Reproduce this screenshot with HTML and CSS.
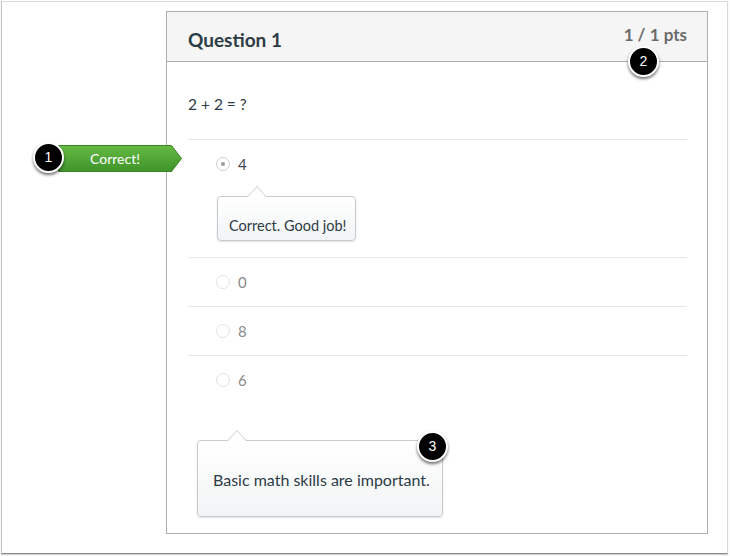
FILE: index.html
```html
<!DOCTYPE html>
<html>
<head>
<meta charset="utf-8">
<link rel="stylesheet" href="styles.css">
</head>
<body>
<div class="frame">
  <div class="card">
    <div class="card-header">
      <div class="title">Question 1</div>
      <div class="pts">1 / 1 pts</div>
    </div>
    <div class="card-body">
      <div class="question">2 + 2 = ?</div>
      <div class="answer answer-first">
        <div class="answer-line selected">
          <span class="radio radio-on"></span><span class="answer-text">4</span>
        </div>
        <div class="tip tip-small">Correct. Good job!</div>
      </div>
      <div class="answer">
        <div class="answer-line"><span class="radio"></span><span class="answer-text">0</span></div>
      </div>
      <div class="answer">
        <div class="answer-line"><span class="radio"></span><span class="answer-text">8</span></div>
      </div>
      <div class="answer answer-last">
        <div class="answer-line"><span class="radio"></span><span class="answer-text">6</span></div>
      </div>
      <div class="tip tip-large">Basic math skills are important.</div>
    </div>
  </div>

  <div class="label">
    <svg class="label-shape" width="124" height="27" viewBox="0 0 124 27">
      <defs>
        <linearGradient id="g" x1="0" y1="0" x2="0" y2="1">
          <stop offset="0" stop-color="#66b942"/>
          <stop offset="1" stop-color="#3f942b"/>
        </linearGradient>
      </defs>
      <polygon points="0.5,0.5 113.5,0.5 123.5,13.5 113.5,26.5 0.5,26.5" fill="url(#g)" stroke="#3a8527" stroke-width="1"/>
    </svg>
    <span class="label-text">Correct!</span>
  </div>

  <div class="badge badge-1">1</div>
  <div class="badge badge-2">2</div>
  <div class="badge badge-3">3</div>
</div>
</body>
</html>
```

FILE: styles.css
```css
* { box-sizing: border-box; }

html, body {
  margin: 0;
  padding: 0;
  background: #ffffff;
}

body {
  font-family: Lato, "Liberation Sans", sans-serif;
  color: #2d3b45;
}

.frame {
  position: relative;
  margin: 1px 2px 2px 1px;
  height: 553px;
  border: 1px solid #d9d9d9;
  border-left-color: #c4c4c4;
  border-bottom: 1px solid #8c8c8c;
  box-shadow: 0 1px 1px rgba(0, 0, 0, 0.18);
  padding: 9px 0 0 164px;
}

.card {
  width: 542px;
  height: 523px;
  border: 1px solid #adadad;
  background: #fff;
}

.card-header {
  height: 50px;
  background: #f5f5f5;
  border-bottom: 1px solid #adadad;
  display: flex;
  justify-content: space-between;
  align-items: flex-start;
  padding: 0 20px 0 21px;
}

.title {
  margin-top: 17px;
  font-size: 19px;
  line-height: 22px;
  font-weight: 700;
  color: #2d3b45;
}

.pts {
  margin-top: 13px;
  font-size: 17px;
  line-height: 20px;
  font-weight: 700;
  color: #6b6b6b;
}

.card-body {
  padding: 0 20px 0 21px;
}

.question {
  padding: 32px 0 25px;
  font-size: 15.5px;
  line-height: 20px;
}

.answer {
  border-top: 1px solid #e6e6e6;
  padding: 14px 0 14px 28px;
}

.answer-first {
  padding: 14px 0 16px 28px;
}

.answer-line {
  display: flex;
  align-items: center;
  height: 20px;
}

.radio {
  width: 14px;
  height: 14px;
  border-radius: 50%;
  border: 1px solid #e3e3e3;
  background: #fff;
  display: flex;
  align-items: center;
  justify-content: center;
}

.radio-on {
  border-color: #cfcfcf;
}

.radio-on::after {
  content: "";
  width: 4px;
  height: 4px;
  border-radius: 50%;
  background: #9a9a9a;
}

.answer-text {
  margin-left: 8px;
  font-size: 15px;
  line-height: 20px;
  color: #8b8b8b;
}

.selected .answer-text {
  color: #3d4a54;
}

.tip {
  position: relative;
  background: linear-gradient(#ffffff, #f2f4f5);
  border: 1px solid #c5cbd0;
  border-radius: 4px;
  box-shadow: 0 1px 2px rgba(0, 0, 0, 0.12);
  color: #2d3b45;
}

.tip::before,
.tip::after {
  content: "";
  position: absolute;
  left: 29px;
  width: 0;
  height: 0;
  border-left: 10px solid transparent;
  border-right: 10px solid transparent;
}

.tip::before {
  top: -11px;
  border-bottom: 11px solid #c5cbd0;
}

.tip::after {
  top: -10px;
  left: 30px;
  border-left-width: 9px;
  border-right-width: 9px;
  border-bottom: 10px solid #ffffff;
}

.tip-small {
  margin-top: 22px;
  margin-left: 1px;
  width: 139px;
  height: 45px;
  padding: 20px 6px 0 11px;
  font-size: 14.5px;
  line-height: 18px;
  white-space: nowrap;
}

.tip-large {
  margin-top: 36px;
  margin-left: 9px;
  width: 246px;
  height: 77px;
  padding: 30px 6px 0 15px;
  font-size: 16px;
  line-height: 18px;
  white-space: nowrap;
}

.label {
  position: absolute;
  left: 56px;
  top: 143px;
  width: 124px;
  height: 27px;
  display: flex;
  align-items: center;
  justify-content: center;
  padding-right: 10px;
}

.label-shape {
  position: absolute;
  left: 0;
  top: 0;
  display: block;
}

.label-text {
  position: relative;
  color: #ffffff;
  font-size: 14px;
  line-height: 16px;
  font-weight: 400;
}

.badge {
  position: absolute;
  width: 31px;
  height: 31px;
  border-radius: 50%;
  background: #000;
  border: 2px solid #ffffff;
  box-shadow: 0 2px 3px rgba(0, 0, 0, 0.55);
  color: #fff;
  font-family: "Liberation Sans", Arial, sans-serif;
  font-size: 14px;
  line-height: 27px;
  text-align: center;
}

.badge-1 { left: 31px; top: 140px; }
.badge-2 { left: 626px; top: 44px; }
.badge-3 { left: 415px; top: 429px; }
```
